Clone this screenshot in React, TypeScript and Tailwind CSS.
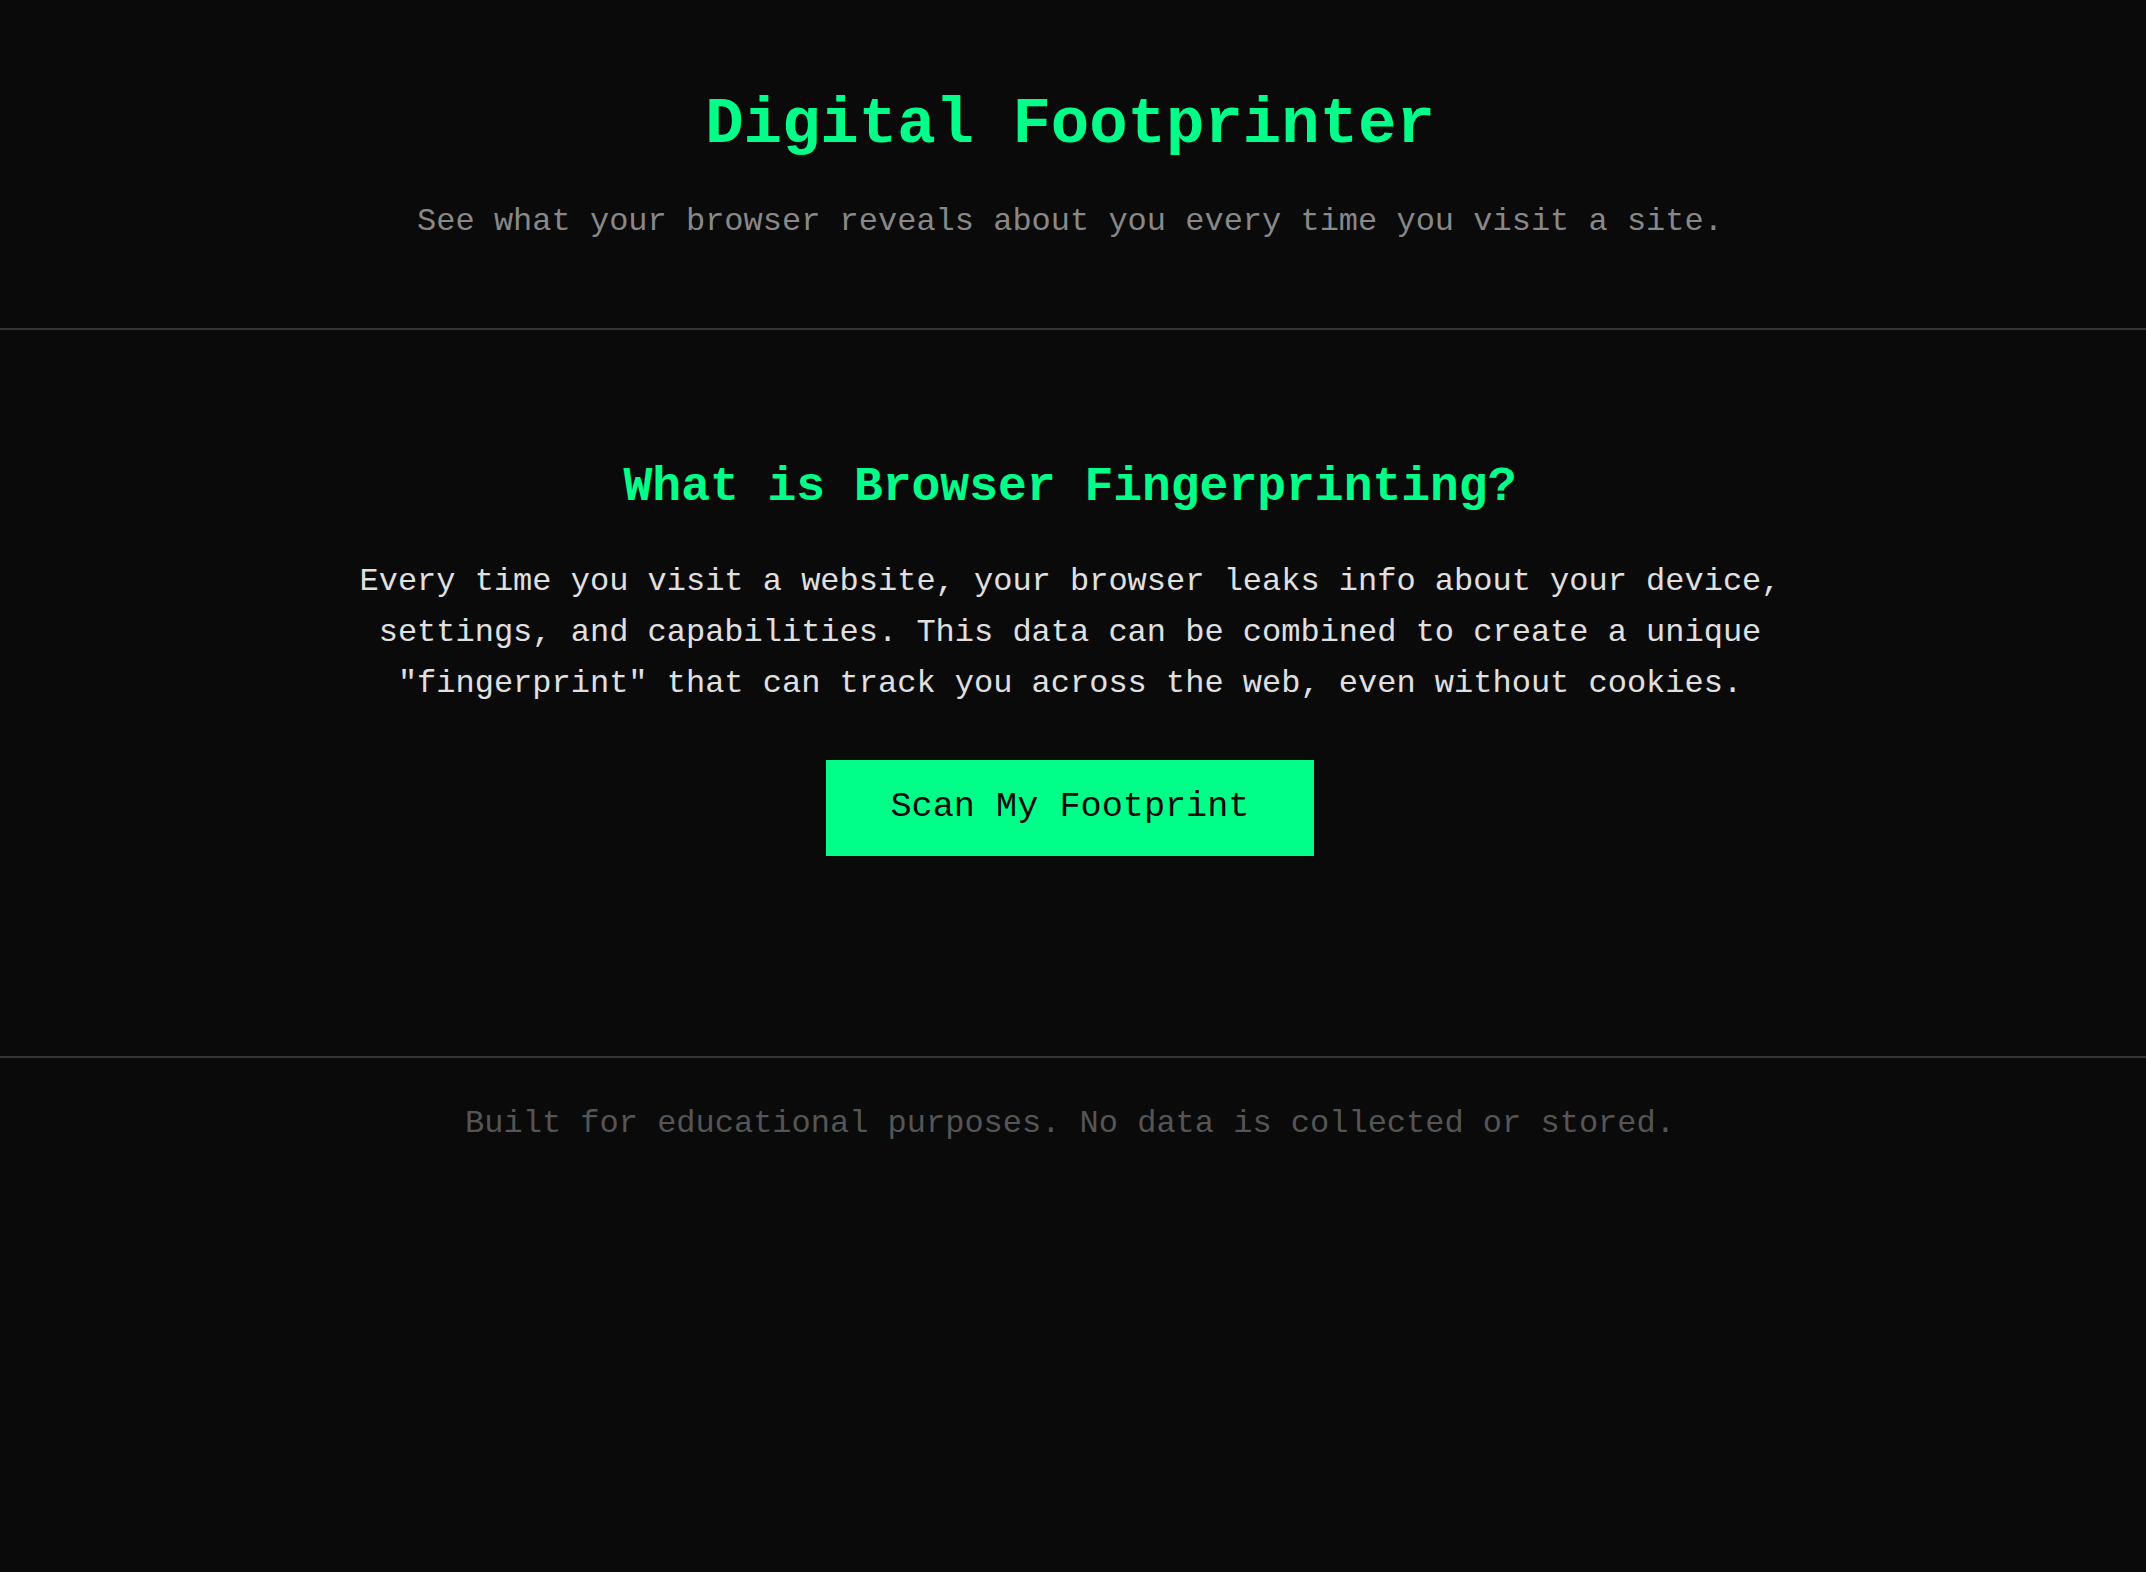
export default function App() {
  return (
    <div
      className="min-h-screen bg-[#0a0a0a] text-[#e0e0e0]"
      style={{ fontFamily: '"Courier New", Courier, "Nimbus Mono PS", "FreeMono", "Liberation Mono", monospace' }}
    >
      {/* Header */}
      <header className="pt-[89px] pb-[88px] pr-[6px] text-center border-b-2 border-[#333]">
        <h1 className="text-[64px] leading-[72px] font-bold text-[#00ff88]">Digital Footprinter</h1>
        <p className="mt-[43px] text-[32px] leading-[36px] text-[#888]">
          See what your browser reveals about you every time you visit a site.
        </p>
      </header>

      {/* Intro */}
      <main className="pt-[130px] pb-[200px] pr-[6px] border-b-2 border-[#333]">
        <section className="mx-auto max-w-[1472px] flex flex-col items-center text-center">
          <h2 className="text-[48px] leading-[54px] font-bold text-[#00ff88]">What is Browser Fingerprinting?</h2>
          <p className="mt-[42px] text-[32px] leading-[51.2px] text-[#e0e0e0]">
            Every time you visit a website, your browser leaks info about your device, settings, and capabilities.
            This data can be combined to create a unique "fingerprint" that can track you across the web, even
            without cookies.
          </p>
          <button className="mt-[50px] h-[96px] w-[488px] bg-[#00ff88] text-[35.2px] text-[#0a0a0a] cursor-pointer">
            Scan My Footprint
          </button>
        </section>
      </main>

      {/* Footer */}
      <footer className="pt-[48px] pr-[6px] text-center">
        <p className="text-[32px] leading-[36px] text-[#555]">
          Built for educational purposes. No data is collected or stored.
        </p>
      </footer>
    </div>
  )
}
